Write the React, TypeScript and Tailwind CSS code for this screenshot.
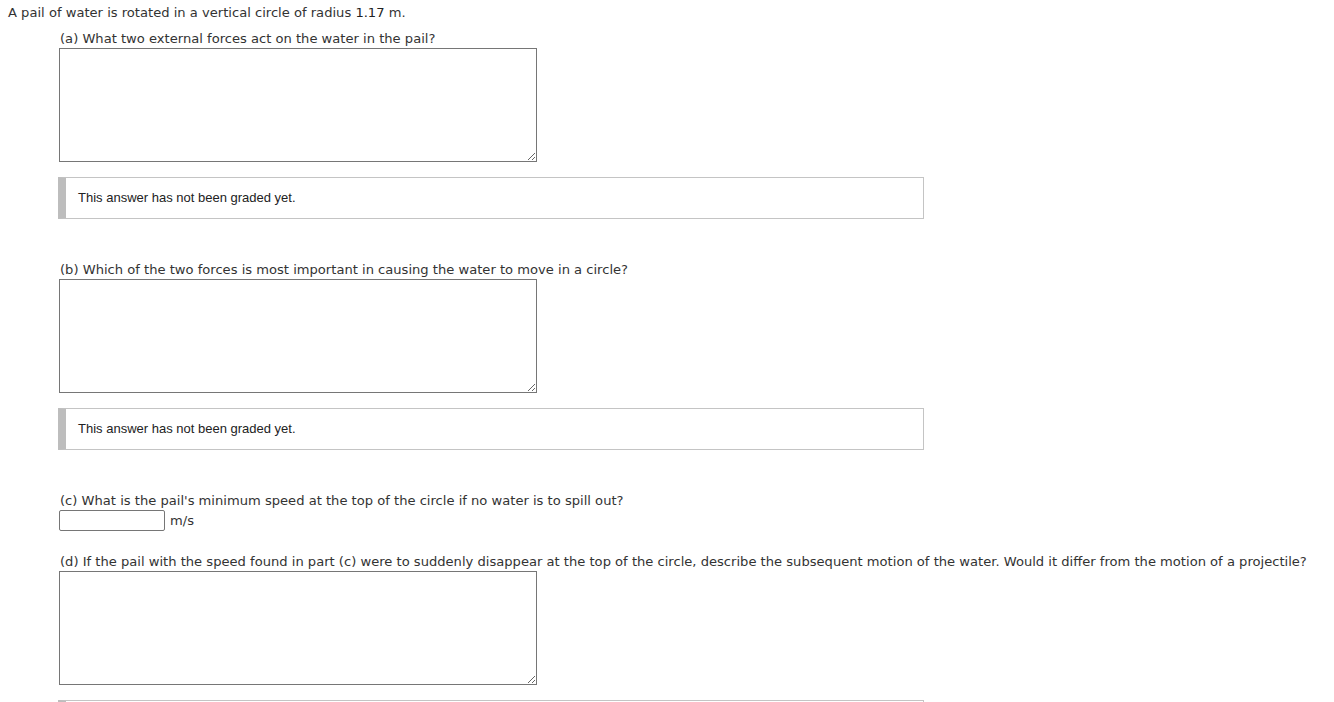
export default function App() {
  const label = "text-[13.1px] leading-[16px] text-[#333]";
  return (
    <div className="min-h-screen bg-white font-['DejaVu_Sans',Verdana,sans-serif] text-[#333]">
      <div className="pl-[8px] pt-[5px]">
        <p className={label}>
          A pail of water is rotated in a vertical circle of radius <span className="text-[#222]">1.17</span> m.
        </p>
        <div className="pl-[51px] pt-[10px]">
          <p className={label + " pl-[1px]"}>(a) What two external forces act on the water in the pail?</p>
          <textarea className="mt-[1px] block h-[114px] w-[478px] border border-[#767676] bg-white" />
          <Graded />

          <p className={label + " mt-[43px] pl-[1px]"}>
            (b) Which of the two forces is most important in causing the water to move in a circle?
          </p>
          <textarea className="mt-[1px] block h-[114px] w-[478px] border border-[#767676] bg-white" />
          <Graded />

          <p className={label + " mt-[43px] pl-[1px]"}>
            (c) What is the pail's minimum speed at the top of the circle if no water is to spill out?
          </p>
          <div className="mt-[1px] flex items-center gap-[5px]">
            <input type="text" className="h-[21px] w-[106px] rounded-[2px] border border-[#767676] bg-white" />
            <span className={label}>m/s</span>
          </div>

          <p className={label + " mt-[23px] pl-[1px]"}>
            (d) If the pail with the speed found in part (c) were to suddenly disappear at the top of the circle, describe the subsequent motion of the water. Would it differ from the motion of a projectile?
          </p>
          <textarea className="mt-[1px] block h-[114px] w-[478px] border border-[#767676] bg-white" />
          <Graded />
        </div>
      </div>
    </div>
  );
}

function Graded() {
  return (
    <div className="mt-[15px] -ml-[1px] flex h-[42px] w-[866px] items-center border border-[#c4c4c4] border-l-[8px] border-l-[#bdbdbd] bg-white pl-[12px]">
      <span className="font-['Liberation_Sans',Arial,sans-serif] text-[13px] text-[#222]">
        This answer has not been graded yet.
      </span>
    </div>
  );
}
